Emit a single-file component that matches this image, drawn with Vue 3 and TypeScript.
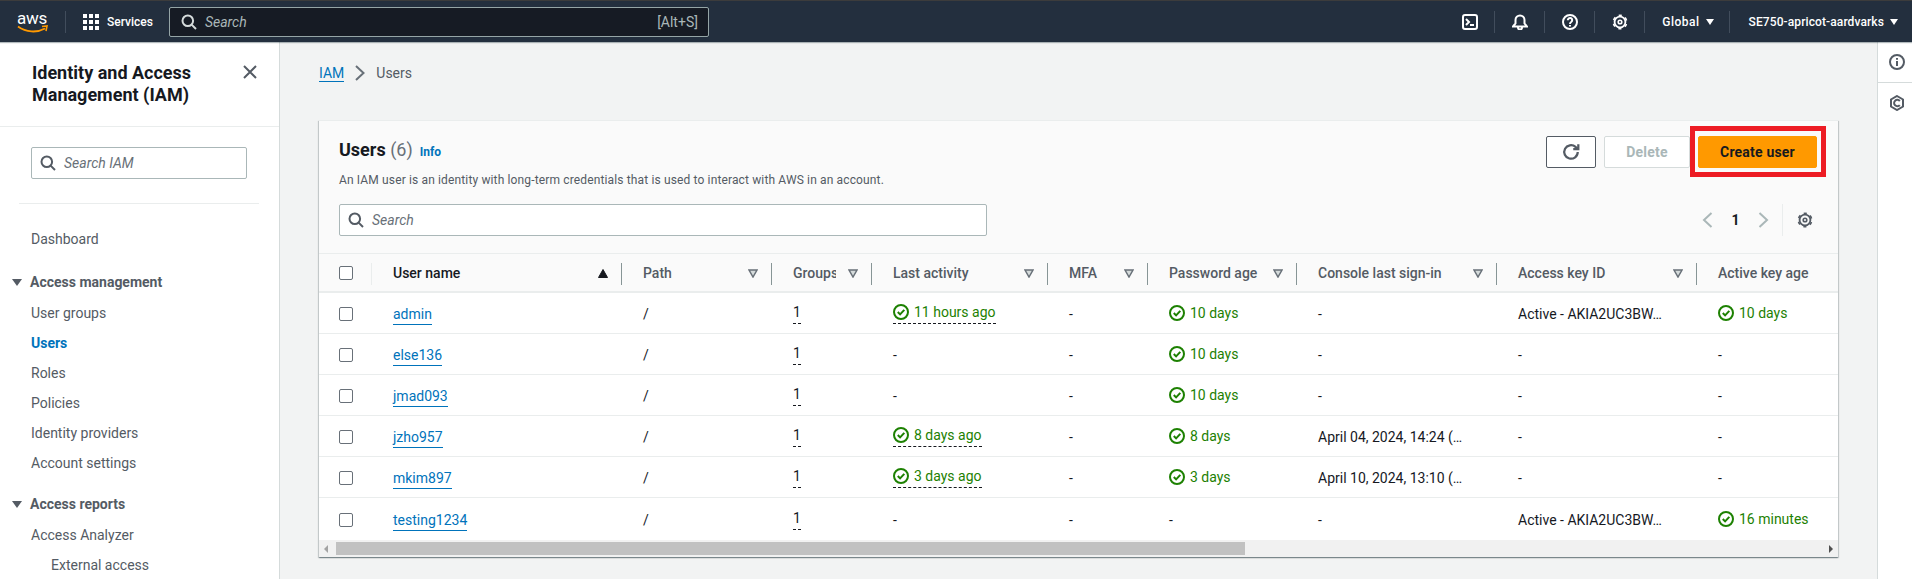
<template>
  <div class="page">
    <header class="topbar">
      <div class="aws-logo">
        <span class="aws-word">aws</span>
        <svg class="aws-smile" width="32" height="10" viewBox="0 0 32 10">
          <path d="M1 1.5C9 7.5 20 8 28 3.5" fill="none" stroke="#f90" stroke-width="1.8" />
          <path d="M25 1.5l5-.5-1 5" fill="none" stroke="#f90" stroke-width="1.6" />
        </svg>
      </div>
      <span class="top-sep logo-sep"></span>
      <div class="services">
        <span class="grid-icon"><i v-for="n in 9" :key="n"></i></span>
        <span>Services</span>
      </div>
      <div class="top-search">
        <svg width="16" height="16" viewBox="0 0 16 16" class="glass"><circle cx="6.8" cy="6.8" r="5.3" /><path d="M10.6 10.6 15 15" /></svg>
        <span class="top-search-text">Search</span>
        <span class="top-search-key">[Alt+S]</span>
      </div>
      <div class="top-right">
        <span class="top-icon">
          <svg width="16" height="16" viewBox="0 0 16 16"><rect x="1" y="1" width="14" height="14" rx="2" /><path d="m4 5 3 3-3 3M8 11h4" /></svg>
        </span>
        <span class="top-sep"></span>
        <span class="top-icon">
          <svg width="16" height="16" viewBox="0 0 16 16"><path d="M1 12.5 3.5 9.5V6a4.5 4.5 0 0 1 9 0v3.5l2.5 3zM6 13v.5a2 2 0 0 0 4 0V13" /></svg>
        </span>
        <span class="top-sep"></span>
        <span class="top-icon">
          <svg width="16" height="16" viewBox="0 0 16 16"><circle cx="8" cy="8" r="7" /><path d="M5.8 6.2a2.2 2.2 0 1 1 3.4 1.8c-.8.5-1.2 1-1.2 1.9M8 11v1.5" /></svg>
        </span>
        <span class="top-sep"></span>
        <span class="top-icon">
          <svg width="16" height="16" viewBox="0 0 16 16">
            <circle cx="8" cy="8" r="5.4" stroke-width="1.8" />
            <circle cx="8" cy="8" r="6.7" stroke-width="1.6" stroke-dasharray="3.2 3.82" stroke-dashoffset="12.1" />
            <circle cx="8" cy="8" r="1.8" stroke-width="1.6" />
          </svg>
        </span>
        <span class="top-sep"></span>
        <span class="top-menu global">Global<i class="caret"></i></span>
        <span class="top-sep"></span>
        <span class="top-menu account">SE750-apricot-aardvarks<i class="caret"></i></span>
      </div>
    </header>

    <div class="body">
      <aside class="sidebar">
        <div class="side-head">
          <h2>Identity and Access Management (IAM)</h2>
          <svg width="16" height="16" viewBox="0 0 16 16" class="side-close"><path d="m2 2 12 12M14 2 2 14" /></svg>
        </div>
        <div class="side-search">
          <svg width="16" height="16" viewBox="0 0 16 16" class="glass dark"><circle cx="6.8" cy="6.8" r="5.3" /><path d="M10.6 10.6 15 15" /></svg>
          <span>Search IAM</span>
        </div>
        <div class="side-rule"></div>
        <a class="nav-link dash">Dashboard</a>
        <div class="nav-section"><i class="nav-caret"></i>Access management</div>
        <a v-for="item in accessItems" :key="item" class="nav-link" :class="{ active: item === 'Users' }">{{ item }}</a>
        <div class="nav-section second"><i class="nav-caret"></i>Access reports</div>
        <a class="nav-link">Access Analyzer</a>
        <a class="nav-link nested">External access</a>
      </aside>

      <main class="main">
        <nav class="crumbs">
          <a>IAM</a>
          <svg width="12" height="16" viewBox="0 0 12 16"><path d="m2 1 7.5 7L2 15" /></svg>
          <span>Users</span>
        </nav>

        <section class="card">
          <div class="card-head">
            <div class="card-title">
              <h1>Users <span>(6)</span></h1>
              <a>Info</a>
            </div>
            <div class="actions">
              <button type="button" class="btn refresh">
                <svg width="18" height="18" viewBox="0 0 16 16"><path d="M14 8a6 6 0 1 1-2-4.5L14 5.5M14.5 1v4.5H10" /></svg>
              </button>
              <button type="button" class="btn disabled">Delete</button>
              <button type="button" class="btn primary">Create user</button>
            </div>
          </div>
          <p class="card-desc">An IAM user is an identity with long-term credentials that is used to interact with AWS in an account.</p>

          <div class="tools">
            <div class="table-search">
              <svg width="16" height="16" viewBox="0 0 16 16" class="glass dark"><circle cx="6.8" cy="6.8" r="5.3" /><path d="M10.6 10.6 15 15" /></svg>
              <span>Search</span>
            </div>
            <div class="pager">
              <svg width="12" height="16" viewBox="0 0 12 16" class="chev"><path d="M9.5 1 2 8l7.5 7" /></svg>
              <b>1</b>
              <svg width="12" height="16" viewBox="0 0 12 16" class="chev"><path d="m2.5 1 7.5 7-7.5 7" /></svg>
              <span class="pager-sep"></span>
              <svg width="16" height="16" viewBox="0 0 16 16" class="pager-gear">
                <circle cx="8" cy="8" r="5.4" stroke-width="1.8" />
                <circle cx="8" cy="8" r="6.7" stroke-width="1.6" stroke-dasharray="3.2 3.82" stroke-dashoffset="12.1" />
                <circle cx="8" cy="8" r="1.8" stroke-width="1.6" />
              </svg>
            </div>
          </div>

          <div class="table-wrap">
            <table class="users">
              <colgroup>
                <col v-for="w in colWidths" :key="w.id" :style="{ width: w.px + 'px' }" />
              </colgroup>
              <thead>
                <tr>
                  <th class="check-cell"><span class="check"></span></th>
                  <th v-for="col in columns" :key="col.label" :class="{ sorted: col.sorted }">
                    <span class="th-label" :class="{ cut: col.cut }">{{ col.label }}</span>
                    <svg v-if="!col.last" class="sort" width="10" height="9" viewBox="0 0 10 9">
                      <path v-if="col.sorted" d="M5 .5 9.5 8.5H.5z" />
                      <path v-else d="M1 1h8L5 8z" />
                    </svg>
                  </th>
                </tr>
              </thead>
              <tbody>
                <tr v-for="u in users" :key="u.name">
                  <td class="check-cell"><span class="check"></span></td>
                  <td><a class="user-link">{{ u.name }}</a></td>
                  <td>/</td>
                  <td><span class="dashed group">1</span></td>
                  <td>
                    <span v-if="u.activity" class="status dashed">
                      <svg width="16" height="16" viewBox="0 0 16 16"><circle cx="8" cy="8" r="7" /><path d="m4.8 8 2.3 2.4 4.2-4.6" /></svg>{{ u.activity }}
                    </span>
                    <template v-else>-</template>
                  </td>
                  <td>-</td>
                  <td>
                    <span v-if="u.password" class="status">
                      <svg width="16" height="16" viewBox="0 0 16 16"><circle cx="8" cy="8" r="7" /><path d="m4.8 8 2.3 2.4 4.2-4.6" /></svg>{{ u.password }}
                    </span>
                    <template v-else>-</template>
                  </td>
                  <td>{{ u.signIn || '-' }}</td>
                  <td>{{ u.accessKey || '-' }}</td>
                  <td>
                    <span v-if="u.keyAge" class="status">
                      <svg width="16" height="16" viewBox="0 0 16 16"><circle cx="8" cy="8" r="7" /><path d="m4.8 8 2.3 2.4 4.2-4.6" /></svg>{{ u.keyAge }}
                    </span>
                    <template v-else>-</template>
                  </td>
                </tr>
              </tbody>
            </table>
          </div>

          <div class="scrollbar">
            <i class="arrow left"></i>
            <span class="thumb"></span>
            <i class="arrow right"></i>
          </div>
          <span class="highlight"></span>
        </section>
      </main>

      <aside class="rail">
        <div class="rail-item first">
          <svg width="16" height="16" viewBox="0 0 16 16"><circle cx="8" cy="8" r="7" /><path d="M8 7v5M8 4v1.8" /></svg>
        </div>
        <div class="rail-item">
          <svg width="16" height="16" viewBox="0 0 16 16"><path d="M8 1l6 3.5v7L8 15l-6-3.5v-7z" /><path d="M10.8 6A3.2 3.2 0 1 0 10.8 10" /></svg>
        </div>
      </aside>
    </div>
  </div>
</template>

<script setup lang="ts">
type UserRow = {
  name: string
  activity?: string
  password?: string
  signIn?: string
  accessKey?: string
  keyAge?: string
}

type Column = {
  label: string
  sorted?: boolean
  cut?: boolean
  last?: boolean
}

const accessItems = ['User groups', 'Users', 'Roles', 'Policies', 'Identity providers', 'Account settings']

const colWidths = [53, 250, 150, 100, 176, 100, 149, 200, 200, 200].map((px, id) => ({ id, px }))

const columns: Column[] = [
  { label: 'User name', sorted: true },
  { label: 'Path' },
  { label: 'Groups', cut: true },
  { label: 'Last activity' },
  { label: 'MFA' },
  { label: 'Password age' },
  { label: 'Console last sign-in' },
  { label: 'Access key ID' },
  { label: 'Active key age', last: true },
]

const users: UserRow[] = [
  { name: 'admin', activity: '11 hours ago', password: '10 days', accessKey: 'Active - AKIA2UC3BW…', keyAge: '10 days' },
  { name: 'else136', password: '10 days' },
  { name: 'jmad093', password: '10 days' },
  { name: 'jzho957', activity: '8 days ago', password: '8 days', signIn: 'April 04, 2024, 14:24 (…' },
  { name: 'mkim897', activity: '3 days ago', password: '3 days', signIn: 'April 10, 2024, 13:10 (…' },
  { name: 'testing1234', accessKey: 'Active - AKIA2UC3BW…', keyAge: '16 minutes' },
]
</script>

<style>
html,
body {
  margin: 0;
  background: #f2f3f3;
}
</style>

<style scoped>
.page {
  height: 579px;
  overflow: hidden;
  display: flex;
  flex-direction: column;
  font-family: Roboto, "Liberation Sans", sans-serif;
  font-size: 14px;
  color: #16191f;
}

svg {
  fill: none;
  stroke: currentColor;
  stroke-width: 2;
  flex: none;
}

.topbar {
  flex: none;
  display: flex;
  align-items: center;
  background: #232f3e;
  border-top: 1px solid #3c3c3c;
  color: #fff;
  box-sizing: border-box;
  height: 42px;
  padding-left: 17px;
  box-shadow: 0 1px 1px rgba(0, 28, 36, 0.3);
  position: relative;
  z-index: 2;
}

.aws-logo {
  width: 32px;
  height: 22px;
  position: relative;
  flex: none;
}

.aws-word {
  position: absolute;
  left: 0;
  top: -3px;
  font-size: 17px;
  line-height: 20px;
  letter-spacing: -0.2px;
}

.aws-smile {
  position: absolute;
  left: 0;
  top: 14px;
  stroke: none;
}

.top-sep {
  width: 1px;
  height: 22px;
  background: #414d5c;
  flex: none;
}

.logo-sep {
  margin-left: 16px;
}

.services {
  display: flex;
  align-items: center;
  gap: 8px;
  margin-left: 17px;
  font-size: 12px;
  font-weight: 500;
}

.grid-icon {
  display: grid;
  grid-template-columns: repeat(3, 4px);
  gap: 2px;
}

.grid-icon i {
  width: 4px;
  height: 4px;
  background: #fff;
}

.top-search {
  width: 540px;
  height: 30px;
  margin-left: 16px;
  box-sizing: border-box;
  display: flex;
  align-items: center;
  padding: 0 10px 0 11px;
  background: #161b24;
  border: 1px solid #95a5a6;
  border-radius: 2px;
  color: #aab7b8;
}

.glass {
  stroke: #d5dbdb;
}

.glass.dark {
  stroke: #545b64;
}

.top-search-text {
  margin-left: 8px;
  font-style: italic;
  font-size: 14px;
}

.top-search-key {
  margin-left: auto;
  font-size: 14px;
}

.top-right {
  margin-left: auto;
  display: flex;
  align-items: center;
}

.top-icon {
  width: 49px;
  display: flex;
  justify-content: center;
  color: #fff;
}

.top-menu {
  display: flex;
  align-items: center;
  font-size: 12px;
  font-weight: 500;
  white-space: nowrap;
  letter-spacing: 0.1px;
}

.global {
  padding: 0 15px 0 17px;
  gap: 6px;
  letter-spacing: 0.5px;
}

.account {
  padding: 0 14px 0 19px;
  gap: 6px;
}

.caret {
  width: 0;
  height: 0;
  border-left: 4px solid transparent;
  border-right: 4px solid transparent;
  border-top: 6px solid #fff;
}

.body {
  flex: 1;
  display: flex;
  min-height: 0;
}

.sidebar {
  width: 280px;
  flex: none;
  box-sizing: border-box;
  background: #fff;
  border-right: 1px solid #d5dbdb;
  overflow: hidden;
}

.side-head {
  height: 85px;
  box-sizing: border-box;
  display: flex;
  justify-content: space-between;
  padding: 20px 21px 0 32px;
  border-bottom: 1px solid #eaeded;
}

.side-head h2 {
  margin: 0;
  width: 190px;
  font-size: 18px;
  font-weight: 700;
  line-height: 22px;
}

.side-close {
  stroke: #545b64;
  margin-top: 2px;
}

.side-search {
  margin: 20px 0 0 31px;
  width: 216px;
  height: 32px;
  box-sizing: border-box;
  display: flex;
  align-items: center;
  gap: 8px;
  padding: 0 8px;
  border: 1px solid #aab7b8;
  border-radius: 2px;
  color: #687078;
  font-style: italic;
}

.side-rule {
  margin: 24px 20px 0 19px;
  height: 1px;
  background: #eaeded;
}

.nav-link {
  display: block;
  height: 30px;
  line-height: 30px;
  padding-left: 31px;
  color: #545b64;
}

.nav-link.dash {
  margin-top: 20px;
}

.nav-link.active {
  color: #0073bb;
  font-weight: 700;
}

.nav-link.nested {
  padding-left: 51px;
}

.nav-section {
  height: 32px;
  margin-top: 12px;
  display: flex;
  align-items: center;
  color: #545b64;
  font-weight: 700;
  padding-left: 12px;
}

.nav-section.second {
  margin-top: 10px;
}

.nav-caret {
  width: 0;
  height: 0;
  margin-right: 8px;
  border-left: 5px solid transparent;
  border-right: 5px solid transparent;
  border-top: 7px solid #545b64;
}

.main {
  flex: 1;
  min-width: 0;
  padding: 0 39px;
  background: #f2f3f3;
}

.crumbs {
  height: 62px;
  display: flex;
  align-items: center;
  gap: 10px;
  color: #545b64;
}

.crumbs a {
  color: #0073bb;
  border-bottom: 1px solid #0073bb;
}

.crumbs svg {
  stroke: #687078;
  stroke-width: 2;
}

.card {
  position: relative;
  margin-top: 16px;
  height: 437px;
  background: #fafafa;
  box-shadow: 0 1px 1px rgba(0, 28, 36, 0.3), 1px 1px 1px rgba(0, 28, 36, 0.15), -1px 1px 1px rgba(0, 28, 36, 0.15);
  border-top: 1px solid #eaeded;
  box-sizing: border-box;
}

.card-head {
  display: flex;
  justify-content: space-between;
  padding: 15px 21px 0 20px;
}

.card-title {
  display: flex;
  align-items: baseline;
  gap: 7px;
  padding-top: 3px;
}

.card-title h1 {
  margin: 0;
  font-size: 18px;
  font-weight: 700;
  line-height: 22px;
}

.card-title h1 span {
  font-weight: 400;
  color: #687078;
}

.card-title a {
  color: #0073bb;
  font-size: 12px;
  font-weight: 700;
}

.actions {
  display: flex;
  gap: 8px;
}

.btn {
  height: 32px;
  box-sizing: border-box;
  padding: 0;
  border-radius: 2px;
  font: inherit;
  font-weight: 700;
  letter-spacing: 0.2px;
  cursor: pointer;
  display: flex;
  align-items: center;
  justify-content: center;
}

.refresh {
  width: 50px;
  background: #fff;
  border: 1px solid #545b64;
  color: #545b64;
}

.disabled {
  width: 86px;
  background: #fff;
  border: 1px solid #d5dbdb;
  color: #aab7b8;
}

.primary {
  width: 119px;
  background: #ff9900;
  border: 1px solid #ff9900;
  color: #16191f;
}

.highlight {
  position: absolute;
  left: 1371px;
  top: 5px;
  width: 136px;
  height: 51px;
  box-sizing: border-box;
  border: 5px solid #ed1c24;
  pointer-events: none;
}

.card-desc {
  margin: 4px 0 0;
  padding-left: 20px;
  font-size: 12px;
  line-height: 16px;
  letter-spacing: 0.14px;
  color: #545b64;
}

.tools {
  display: flex;
  justify-content: space-between;
  align-items: center;
  margin-top: 16px;
  padding: 0 20px;
}

.table-search {
  width: 648px;
  height: 32px;
  box-sizing: border-box;
  display: flex;
  align-items: center;
  gap: 8px;
  padding: 0 8px;
  background: #fff;
  border: 1px solid #aab7b8;
  border-radius: 2px;
  color: #687078;
  font-style: italic;
}

.pager {
  display: flex;
  align-items: center;
  color: #16191f;
}

.pager b {
  width: 43px;
  text-align: center;
}

.chev {
  stroke: #aab7b8;
}

.pager-sep {
  width: 1px;
  height: 32px;
  margin: 0 14px 0 13px;
  background: #eaeded;
}

.pager-gear {
  stroke: #545b64;
  margin-right: 5px;
}

.table-wrap {
  margin-top: 17px;
  overflow: hidden;
}

.users {
  width: 1578px;
  table-layout: fixed;
  border-collapse: separate;
  border-spacing: 0;
}

.users th {
  position: relative;
  height: 40px;
  padding: 0 0 0 21px;
  text-align: left;
  font-weight: 500;
  color: #545b64;
  background: #fafafa;
  border-top: 1px solid #eaeded;
  border-bottom: 2px solid #eaeded;
  box-sizing: border-box;
  white-space: nowrap;
}

.users th.sorted {
  color: #16191f;
}

.users th::after {
  content: "";
  position: absolute;
  right: 0;
  top: 9px;
  width: 1px;
  height: 22px;
  background: #879596;
}

.users th:first-child::after {
  background: #eaeded;
}

.users th:last-child::after {
  display: none;
}

.th-label.cut {
  display: inline-block;
  width: 43px;
  overflow: hidden;
  vertical-align: bottom;
}

.sort {
  position: absolute;
  right: 14px;
  top: 15px;
  stroke: #687078;
  stroke-width: 1.5;
  fill: #d5dbdb;
}

.sorted .sort {
  stroke: #16191f;
  fill: #16191f;
  stroke-width: 1;
}

.users td {
  height: 41px;
  padding: 2px 0 0 21px;
  background: #fff;
  border-bottom: 1px solid #eaeded;
  box-sizing: border-box;
  white-space: nowrap;
  overflow: hidden;
}

.users tr:last-child td {
  border-bottom: none;
  height: 42px;
}

.users .check-cell {
  padding-left: 20px;
  padding-top: 1px;
}

.check {
  display: block;
  width: 12px;
  height: 12px;
  background: #fff;
  border: 1px solid #687078;
  border-radius: 2px;
}

.user-link {
  color: #0073bb;
  border-bottom: 1px solid #0073bb;
  padding-bottom: 2px;
}

.dashed {
  padding-bottom: 3px;
  border-bottom: 1px dashed #16191f;
}

.group {
  display: inline-block;
  width: 8px;
  line-height: 16px;
}

.status {
  display: inline-flex;
  align-items: center;
  gap: 5px;
  color: #1d8102;
}

.scrollbar {
  height: 17px;
  display: flex;
  align-items: center;
  background: #f1f1f1;
}

.thumb {
  width: 909px;
  height: 13px;
  margin-left: 9px;
  background: #c1c1c1;
}

.arrow {
  width: 0;
  height: 0;
  border-top: 4px solid transparent;
  border-bottom: 4px solid transparent;
}

.arrow.left {
  margin-left: 5px;
  margin-right: -1px;
  border-right: 4px solid #a3a3a3;
}

.arrow.right {
  margin-left: auto;
  margin-right: 5px;
  border-left: 4px solid #505050;
}

.rail {
  width: 35px;
  flex: none;
  background: #fff;
  border-left: 1px solid #d5dbdb;
  box-sizing: border-box;
}

.rail-item {
  display: flex;
  justify-content: center;
  color: #545b64;
  padding: 12px 0 0 3px;
}

.rail-item.first {
  height: 41px;
  box-sizing: border-box;
  border-bottom: 1px solid #d5dbdb;
}
</style>
